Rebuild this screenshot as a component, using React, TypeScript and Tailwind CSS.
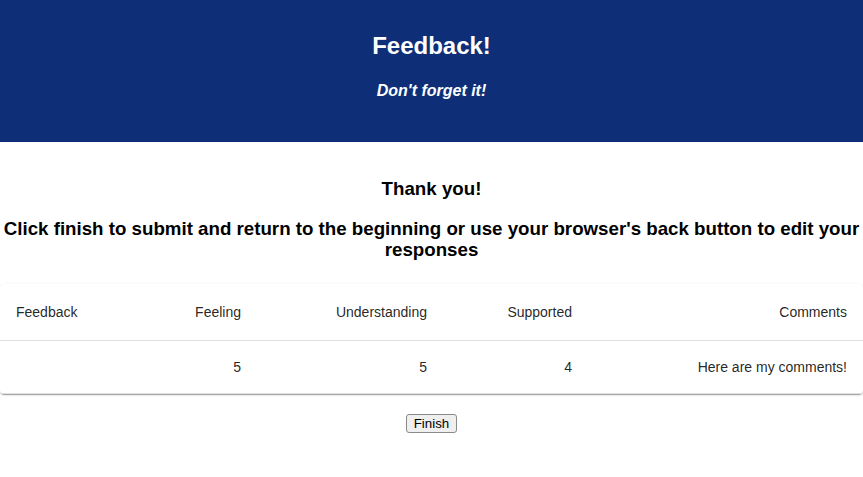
const columns = [
  { label: 'Feedback', value: '', width: 'w-[128px]', align: 'text-left' },
  { label: 'Feeling', value: '5', width: 'w-[129px]', align: 'text-right' },
  { label: 'Understanding', value: '5', width: 'w-[186px]', align: 'text-right' },
  { label: 'Supported', value: '4', width: 'w-[145px]', align: 'text-right' },
  { label: 'Comments', value: 'Here are my comments!', width: '', align: 'text-right' },
]

export default function App() {
  return (
    <div className="min-h-[477px] bg-white font-['Liberation_Sans',Arial,sans-serif] text-black">
      <header className="h-[142px] bg-[#0e2f77] flex flex-col items-center pt-[32px] text-white">
        <h1 className="text-[24px] leading-[28px] font-bold">Feedback!</h1>
        <h3 className="mt-[22px] text-[16px] leading-[18px] font-bold italic">Don&apos;t forget it!</h3>
      </header>

      <div className="flex flex-col items-center text-center pt-[36px]">
        <h3 className="text-[18.72px] leading-[21.5px] font-bold">Thank you!</h3>
        <h3 className="mt-[18px] text-[18.72px] leading-[21.5px] font-bold">
          Click finish to submit and return to the beginning or use your browser&apos;s back button to edit your responses
        </h3>
      </div>

      <div className="mt-[23px] rounded-[4px] bg-white shadow-[0_2px_1px_-1px_rgba(0,0,0,0.2),0_1px_1px_0_rgba(0,0,0,0.14),0_1px_3px_0_rgba(0,0,0,0.12)]">
        <table className="w-full table-fixed border-collapse text-[14px] text-black/[0.87]">
          <thead>
            <tr>
              {columns.map((c) => (
                <th
                  key={c.label}
                  className={`${c.width} ${c.align} p-4 leading-6 font-normal border-b border-[#e0e0e0]`}
                >
                  {c.label}
                </th>
              ))}
            </tr>
          </thead>
          <tbody>
            <tr>
              {columns.map((c) => (
                <td key={c.label} className={`${c.align} p-4 leading-5 border-b border-[#e0e0e0]`}>
                  {c.value}
                </td>
              ))}
            </tr>
          </tbody>
        </table>
      </div>

      <div className="flex justify-center mt-[20px]">
        <button className="h-[19px] px-[7px] text-[13.33px] leading-[15px] bg-[#efefef] border border-[#8a8a8a] rounded-[3px] text-black">
          Finish
        </button>
      </div>
    </div>
  )
}
